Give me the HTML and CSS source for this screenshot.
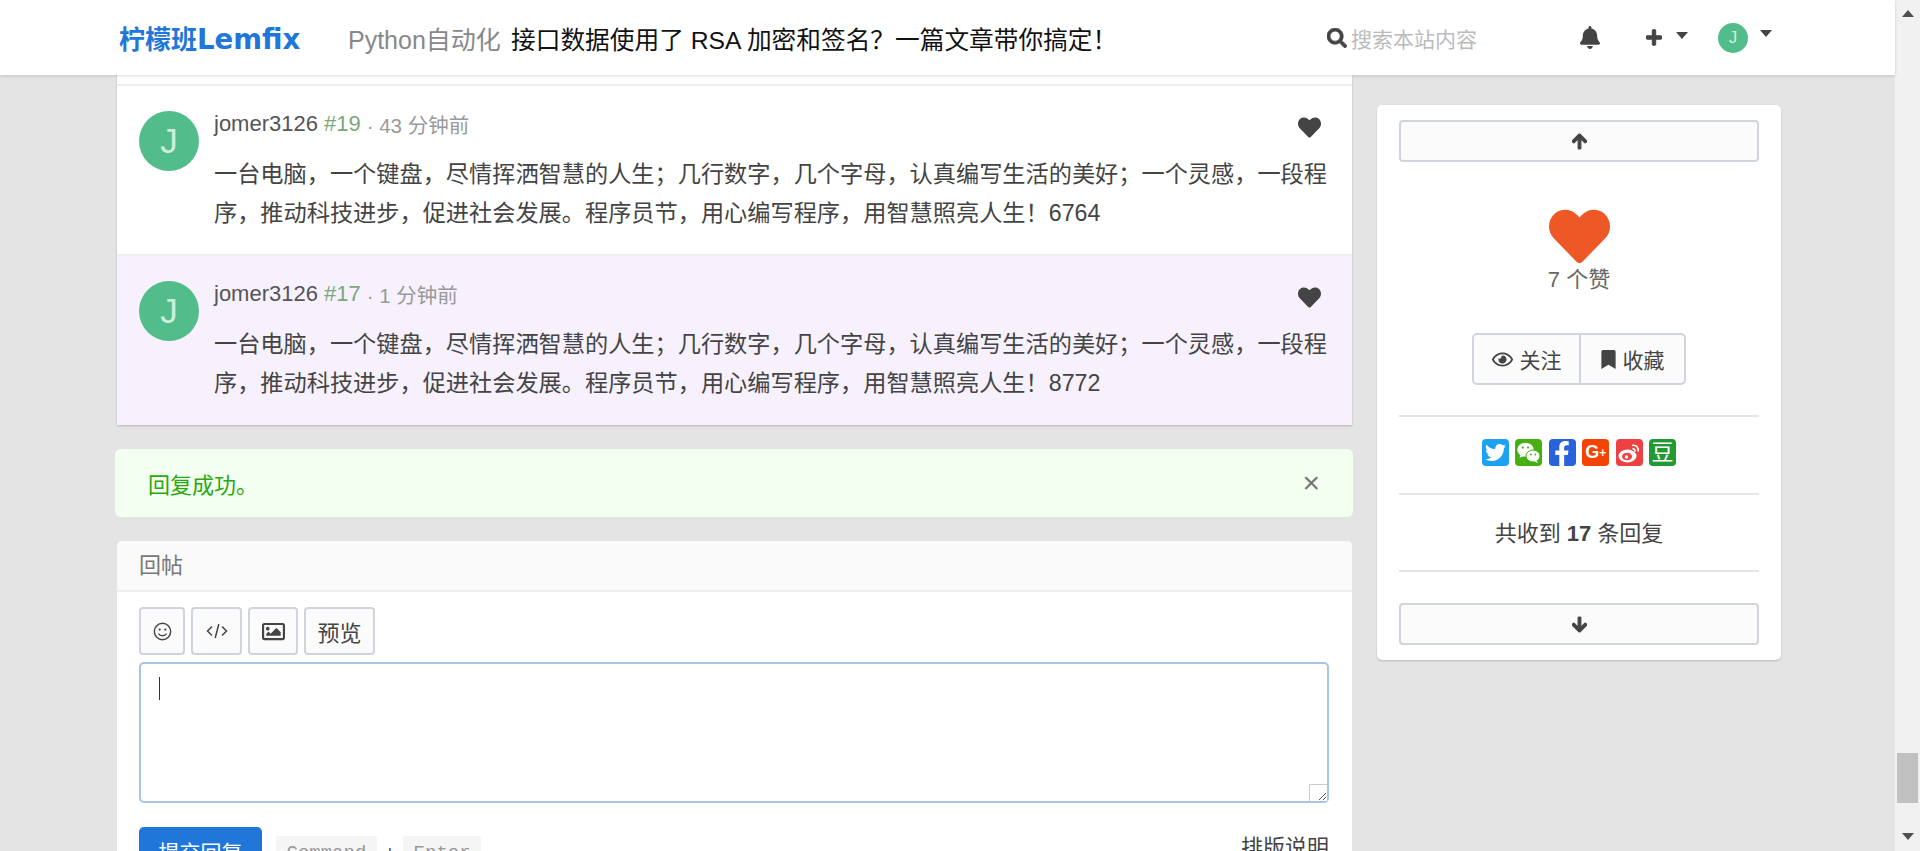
FILE: index.html
```html
<!DOCTYPE html>
<html lang="en">
<head>
    <meta charset="UTF-8">
    <title>接口数据使用了 RSA 加密和签名？一篇文章带你搞定！</title>
    <link rel="stylesheet" href="styles.css">
</head>
<body>
<div class="viewport">
    <div class="page">
        <div class="navbar">
            <a class="brand">柠檬班<span class="brand-latin">Lemfix</span></a>
            <a class="nav-node">Python自动化</a>
            <a class="nav-title">接口数据使用了 RSA 加密和签名？一篇文章带你搞定！</a>
            <div class="nav-search">
                <svg class="icon-search" viewBox="0 0 512 512"><path d="M505 442.7L405.3 343c-4.5-4.5-10.6-7-17-7H372c27.6-35.3 44-79.7 44-128C416 93.1 322.9 0 208 0S0 93.1 0 208s93.1 208 208 208c48.3 0 92.7-16.4 128-44v16.3c0 6.4 2.5 12.5 7 17l99.7 99.7c9.4 9.4 24.6 9.4 33.9 0l28.3-28.3c9.4-9.4 9.4-24.6.1-34zM208 336c-70.7 0-128-57.2-128-128 0-70.7 57.2-128 128-128 70.7 0 128 57.2 128 128 0 70.7-57.2 128-128 128z"/></svg>
                <span>搜索本站内容</span>
            </div>
            <svg class="icon-bell" viewBox="0 0 448 512"><path d="M224 512c35.32 0 63.97-28.65 63.97-64H160.03c0 35.35 28.65 64 63.97 64zm215.39-149.71c-19.32-20.76-55.47-51.99-55.47-154.29 0-77.7-54.48-139.9-127.94-155.16V32c0-17.67-14.32-32-31.98-32s-31.98 14.33-31.98 32v20.84C118.56 68.1 64.08 130.3 64.08 208c0 102.3-36.15 133.53-55.47 154.29-6 6.45-8.66 14.16-8.61 21.71.11 16.4 12.98 32 32.1 32h383.8c19.12 0 32-15.6 32.1-32 .05-7.55-2.61-15.27-8.61-21.71z"/></svg>
            <svg class="icon-plus" viewBox="0 0 448 512"><path d="M416 208H272V64c0-17.67-14.33-32-32-32h-32c-17.67 0-32 14.33-32 32v144H32c-17.67 0-32 14.33-32 32v32c0 17.67 14.33 32 32 32h144v144c0 17.67 14.33 32 32 32h32c17.67 0 32-14.33 32-32V304h144c17.67 0 32-14.33 32-32v-32c0-17.67-14.33-32-32-32z"/></svg>
            <span class="caret caret-plus"></span>
            <span class="avatar avatar-small">J</span>
            <span class="caret caret-user"></span>
        </div>

        <div class="columns">
            <div class="main">
                <div class="replies">
                    <div class="reply">
                        <span class="avatar avatar-large">J</span>
                        <div class="reply-body">
                            <div class="reply-meta">
                                <span class="reply-name">jomer3126</span>
                                <span class="reply-floor">#19</span>
                                <span class="reply-time">· 43 分钟前</span>
                                <svg class="icon-like" viewBox="0 0 512 512"><path d="M462.3 62.6C407.5 15.9 326 24.3 275.7 76.2L256 96.5l-19.7-20.3C186.1 24.3 104.5 15.9 49.7 62.6c-62.8 53.6-66.1 149.8-9.9 207.9l193.5 199.8c12.5 12.9 32.8 12.9 45.3 0l193.5-199.8c56.3-58.1 53-154.3-9.8-207.9z"/></svg>
                            </div>
                            <p class="reply-text">一台电脑，一个键盘，尽情挥洒智慧的人生；几行数字，几个字母，认真编写生活的美好；一个灵感，一段程序，推动科技进步，促进社会发展。程序员节，用心编写程序，用智慧照亮人生！6764</p>
                        </div>
                    </div>
                    <div class="reply reply-new">
                        <span class="avatar avatar-large">J</span>
                        <div class="reply-body">
                            <div class="reply-meta">
                                <span class="reply-name">jomer3126</span>
                                <span class="reply-floor">#17</span>
                                <span class="reply-time">· 1 分钟前</span>
                                <svg class="icon-like" viewBox="0 0 512 512"><path d="M462.3 62.6C407.5 15.9 326 24.3 275.7 76.2L256 96.5l-19.7-20.3C186.1 24.3 104.5 15.9 49.7 62.6c-62.8 53.6-66.1 149.8-9.9 207.9l193.5 199.8c12.5 12.9 32.8 12.9 45.3 0l193.5-199.8c56.3-58.1 53-154.3-9.8-207.9z"/></svg>
                            </div>
                            <p class="reply-text">一台电脑，一个键盘，尽情挥洒智慧的人生；几行数字，几个字母，认真编写生活的美好；一个灵感，一段程序，推动科技进步，促进社会发展。程序员节，用心编写程序，用智慧照亮人生！8772</p>
                        </div>
                    </div>
                </div>

                <div class="alert">
                    <span>回复成功。</span>
                    <span class="alert-close">×</span>
                </div>

                <div class="composer">
                    <div class="composer-head">回帖</div>
                    <div class="composer-body">
                        <div class="toolbar">
                            <button class="tool tool-smile">
                                <svg viewBox="0 0 20 20"><circle cx="10" cy="10" r="8.6"/><circle class="dot" cx="7" cy="8" r="1.2"/><circle class="dot" cx="13" cy="8" r="1.2"/><path d="M5.6 12.2c2.2 3 6.6 3 8.8 0"/></svg>
                            </button>
                            <button class="tool tool-code">
                                <svg viewBox="0 0 22 20"><path d="M6 5.5L1.5 10 6 14.5M16 5.5L20.5 10 16 14.5M12.8 3L9.2 17"/></svg>
                            </button>
                            <button class="tool tool-image">
                                <svg viewBox="0 0 512 512"><path d="M464 64H48C21.49 64 0 85.49 0 112v288c0 26.51 21.49 48 48 48h416c26.51 0 48-21.49 48-48V112c0-26.51-21.49-48-48-48zm-6 336H54a6 6 0 0 1-6-6V118a6 6 0 0 1 6-6h404a6 6 0 0 1 6 6v276a6 6 0 0 1-6 6zM128 152c-22.091 0-40 17.909-40 40s17.909 40 40 40 40-17.909 40-40-17.909-40-40-40zM96 352h320v-80l-87.515-87.515c-4.686-4.686-12.284-4.686-16.971 0L192 304l-39.515-39.515c-4.686-4.686-12.284-4.686-16.971 0L96 304v48z"/></svg>
                            </button>
                            <button class="tool tool-preview">预览</button>
                        </div>
                        <div class="editor">
                            <span class="editor-caret"></span>
                            <span class="editor-resize">
                                <svg viewBox="0 0 17 16"><path d="M9 15L16 8M13 15L16 12"/></svg>
                            </span>
                        </div>
                        <div class="composer-foot">
                            <button class="submit">提交回复</button>
                            <kbd>Command</kbd>
                            <span class="kbd-plus">+</span>
                            <kbd>Enter</kbd>
                            <a class="format-help">排版说明</a>
                        </div>
                    </div>
                </div>
            </div>

            <div class="sidebar">
                <button class="jump jump-up">
                    <svg viewBox="0 0 448 512"><path d="M34.9 289.5l-22.2-22.2c-9.4-9.4-9.4-24.6 0-33.9L207 39c9.4-9.4 24.6-9.4 33.9 0l194.3 194.3c9.4 9.4 9.4 24.6 0 33.9L413 289.4c-9.5 9.5-25 9.3-34.3-.4L264 168.6V456c0 13.3-10.7 24-24 24h-32c-13.3 0-24-10.7-24-24V168.6L69.2 289.1c-9.3 9.8-24.8 10-34.3.4z"/></svg>
                </button>
                <div class="likes">
                    <svg class="icon-big-heart" viewBox="0 0 512 512"><path d="M462.3 62.6C407.5 15.9 326 24.3 275.7 76.2L256 96.5l-19.7-20.3C186.1 24.3 104.5 15.9 49.7 62.6c-62.8 53.6-66.1 149.8-9.9 207.9l193.5 199.8c12.5 12.9 32.8 12.9 45.3 0l193.5-199.8c56.3-58.1 53-154.3-9.8-207.9z"/></svg>
                    <span>7 个赞</span>
                </div>
                <div class="btn-group">
                    <button class="group-btn">
                        <svg class="icon-eye" viewBox="0 0 576 512"><path d="M288 144a110.94 110.94 0 0 0-31.24 5 55.4 55.4 0 0 1 7.24 27 56 56 0 0 1-56 56 55.4 55.4 0 0 1-27-7.24A111.71 111.71 0 1 0 288 144zm284.52 97.4C518.29 135.59 410.93 64 288 64S57.68 135.64 3.48 241.41a32.35 32.35 0 0 0 0 29.19C57.71 376.41 165.07 448 288 448s230.32-71.64 284.52-177.41a32.35 32.35 0 0 0 0-29.19zM288 400c-98.65 0-189.09-55-237.93-144C98.91 167 189.34 112 288 112s189.09 55 237.93 144C477.1 345 386.66 400 288 400z"/></svg>
                        关注
                    </button>
                    <button class="group-btn">
                        <svg class="icon-bookmark" viewBox="0 0 384 512"><path d="M0 512V48C0 21.49 21.49 0 48 0h288c26.51 0 48 21.49 48 48v464L192 400 0 512z"/></svg>
                        收藏
                    </button>
                </div>
                <div class="shares">
                    <span class="share share-twitter">
                        <svg viewBox="0 0 512 512"><path d="M459.37 151.716c.325 4.548.325 9.097.325 13.645 0 138.72-105.583 298.558-298.558 298.558-59.452 0-114.68-17.219-161.137-47.106 8.447.974 16.568 1.299 25.34 1.299 49.055 0 94.213-16.568 130.274-44.832-46.132-.975-84.792-31.188-98.112-72.772 6.498.974 12.995 1.624 19.818 1.624 9.421 0 18.843-1.3 27.614-3.573-48.081-9.747-84.143-51.98-84.143-102.985v-1.299c13.969 7.797 30.214 12.67 47.431 13.319-28.264-18.843-46.781-51.005-46.781-87.391 0-19.492 5.197-37.36 14.294-52.954 51.655 63.675 129.3 105.258 216.365 109.807-1.624-7.797-2.599-15.918-2.599-24.04 0-57.828 46.782-104.934 104.934-104.934 30.213 0 57.502 12.67 76.67 33.137 23.715-4.548 46.456-13.32 66.599-25.34-7.798 24.366-24.366 44.833-46.132 58.9 21.117-2.274 41.584-8.122 60.426-16.243-14.292 20.791-32.161 39.308-52.628 54.253z"/></svg>
                    </span>
                    <span class="share share-wechat">
                        <svg viewBox="0 0 27 27"><ellipse cx="10.5" cy="10.8" rx="8.2" ry="7"/><path d="M5.5 15.5l-1 3.5 4-2z"/><ellipse class="wechat-front" cx="18" cy="17" rx="7" ry="6"/><path d="M21.5 21.5l1.5 2.5-3.5-1.5z"/><circle class="eye" cx="7.8" cy="8.6" r="1.1"/><circle class="eye" cx="13" cy="8.6" r="1.1"/><circle class="eye" cx="15.8" cy="15.5" r=".9"/><circle class="eye" cx="20.3" cy="15.5" r=".9"/></svg>
                    </span>
                    <span class="share share-facebook">
                        <svg viewBox="0 0 320 512"><path d="M279.14 288l14.22-92.66h-88.91v-60.13c0-25.35 12.42-50.06 52.24-50.06h40.42V6.26S260.43 0 225.36 0c-73.22 0-121.08 44.38-121.08 124.72v70.62H22.89V288h81.39v224h100.17V288z"/></svg>
                    </span>
                    <span class="share share-google">G<small>+</small></span>
                    <span class="share share-weibo">
                        <svg viewBox="0 0 27 27"><ellipse class="weibo-body" cx="11.5" cy="17" rx="9" ry="6.5"/><ellipse class="weibo-eye" cx="11" cy="17.5" rx="5" ry="3.8"/><circle class="weibo-pupil" cx="10.5" cy="18" r="1.7"/><path class="weibo-wave" d="M16 6.5c4-1 7 2 6 6M16.5 10c2-.4 2.8 1 2.3 2.7"/></svg>
                    </span>
                    <span class="share share-douban">豆</span>
                </div>
                <div class="total">共收到 <b>17</b> 条回复</div>
                <button class="jump jump-down">
                    <svg viewBox="0 0 448 512"><path d="M413.1 222.5l22.2 22.2c9.4 9.4 9.4 24.6 0 33.9L241 473c-9.4 9.4-24.6 9.4-33.9 0L12.7 278.6c-9.4-9.4-9.4-24.6 0-33.9l22.2-22.2c9.5-9.5 25-9.3 34.3.4L184 343.4V56c0-13.3 10.7-24 24-24h32c13.3 0 24 10.7 24 24v287.4l114.8-120.5c9.3-9.8 24.8-10 34.3-.4z"/></svg>
                </button>
            </div>
        </div>
    </div>

    <div class="scrollbar">
        <span class="scroll-arrow scroll-arrow-up"></span>
        <span class="scroll-thumb"></span>
        <span class="scroll-arrow scroll-arrow-down"></span>
    </div>
</div>
</body>
</html>
```

FILE: styles.css
```css
html, body {
    margin: 0;
    height: 851px;
    overflow: hidden;
}
body {
    background-color: #e4e4e4;
    font-family: "Liberation Sans", "Noto Sans CJK SC", sans-serif;
    font-size: 22px;
    color: #444;
}
button {
    font-family: inherit;
    color: inherit;
    cursor: pointer;
}
svg {
    display: block;
    fill: currentColor;
}
.viewport {
    display: flex;
    height: 851px;
}
.page {
    flex: 1;
    min-width: 0;
}

/* navbar */
.navbar {
    position: relative;
    z-index: 2;
    display: flex;
    align-items: center;
    height: 75px;
    padding-left: 119px;
    background: #fff;
    box-shadow: 0 1px 3px rgba(0, 0, 0, 0.15);
}
.brand {
    width: 229px;
    font-size: 26px;
    font-weight: bold;
    color: #2176d9;
}
.brand-latin {
    font-family: "DejaVu Sans", sans-serif;
    font-size: 27.6px;
}
.nav-node {
    width: 163px;
    font-size: 25px;
    color: #888;
}
.nav-title {
    width: 815px;
    font-size: 24.7px;
    color: #111;
}
.nav-search {
    display: flex;
    align-items: center;
    gap: 4px;
    width: 254px;
    font-size: 21px;
    color: #bbb;
}
.icon-search {
    width: 20px;
    height: 20px;
    margin-left: 1px;
    color: #444;
    stroke: currentColor;
    stroke-width: 16;
}
.icon-bell {
    width: 20px;
    height: 23px;
    margin-right: 46px;
}
.icon-plus {
    width: 16px;
    height: 19px;
    margin-right: 14px;
    stroke: currentColor;
    stroke-width: 28;
}
.caret {
    width: 0;
    height: 0;
    border-left: 6px solid transparent;
    border-right: 6px solid transparent;
    border-top: 7px solid #444;
}
.caret-plus {
    margin-right: 30px;
    margin-bottom: 4px;
}
.caret-user {
    margin-left: 12px;
    margin-bottom: 8px;
}
.avatar {
    display: flex;
    align-items: center;
    justify-content: center;
    flex-shrink: 0;
    border-radius: 50%;
    background: #52bd8b;
    color: #cdeedd;
}
.avatar-small {
    width: 30px;
    height: 30px;
    font-size: 17px;
}
.avatar-large {
    width: 60px;
    height: 60px;
    font-size: 35px;
}

/* layout */
.columns {
    display: flex;
    gap: 25px;
    padding-left: 117px;
}
.main {
    width: 1235px;
}

/* replies */
.replies {
    padding-top: 9px;
    background: #fff;
    box-shadow: 0 1px 2px rgba(0, 0, 0, 0.2);
}
.reply {
    display: flex;
    gap: 15px;
    height: 143px;
    padding: 25px 22px 0;
    border-top: 2px solid #eee;
}
.reply-new {
    height: 144px;
    background: #f6f1fc;
}
.reply-body {
    flex: 1;
    min-width: 0;
}
.reply-meta {
    display: flex;
    align-items: center;
    gap: 6px;
    height: 25px;
    font-size: 22px;
    color: #999;
}
.reply-name {
    color: #555;
}
.reply-floor {
    color: #7aa87a;
}
.reply-time {
    font-size: 20.5px;
}
.icon-like {
    width: 23px;
    height: 23px;
    margin-left: auto;
    margin-top: 8px;
    margin-right: 9px;
    color: #444;
}
.reply-text {
    margin: 19px 0 0;
    font-size: 23.2px;
    line-height: 38.5px;
    color: #444;
}

/* alert */
.alert {
    display: flex;
    align-items: center;
    justify-content: space-between;
    height: 68px;
    margin: 24px -1px 24px -2px;
    padding: 0 33px;
    border-radius: 6px;
    background: #f3fff0;
    color: #2ba80f;
}
.alert-close {
    font-size: 30px;
    color: #777;
}

/* composer */
.composer {
    border-radius: 5px 5px 0 0;
    background: #fff;
}
.composer-head {
    height: 49px;
    padding-left: 22px;
    line-height: 49px;
    background: #fafafa;
    border-bottom: 2px solid #eee;
    border-radius: 5px 5px 0 0;
    color: #777;
}
.composer-body {
    padding: 15px 23px 0 22px;
}
.toolbar {
    display: flex;
    gap: 6px;
}
.tool {
    display: flex;
    align-items: center;
    justify-content: center;
    height: 48px;
    padding: 0;
    border: 2px solid #d0d5dd;
    border-radius: 4px;
    background: #fbfbfb;
}
.tool-smile {
    width: 46px;
}
.tool-smile svg {
    width: 19px;
    height: 19px;
    fill: none;
    stroke: #444;
    stroke-width: 1.5;
}
.tool-smile .dot {
    fill: #444;
    stroke: none;
}
.tool-code {
    width: 51px;
}
.tool-code svg {
    width: 22px;
    height: 20px;
    fill: none;
    stroke: #444;
    stroke-width: 1.5;
}
.tool-image {
    width: 50px;
}
.tool-image svg {
    width: 23px;
    height: 23px;
}
.tool-preview {
    width: 71px;
    font-size: 22px;
}
.editor {
    position: relative;
    height: 137px;
    margin-top: 7px;
    border: 2px solid #a9c3e2;
    border-radius: 5px;
    background: #fff;
}
.editor-caret {
    position: absolute;
    top: 13px;
    left: 18px;
    width: 1px;
    height: 23px;
    background: #333;
}
.editor-resize {
    position: absolute;
    right: 0;
    bottom: 0;
    width: 17px;
    height: 16px;
    border-top: 1px solid #ccc;
    border-left: 1px solid #ccc;
    background: #fff;
}
.editor-resize svg {
    fill: none;
    stroke: #555;
    stroke-width: 1;
}
.composer-foot {
    display: flex;
    align-items: flex-start;
    margin-top: 24px;
}
.submit {
    width: 123px;
    height: 48px;
    padding: 0;
    border: 0;
    border-radius: 5px;
    background: #2176d9;
    color: #fff;
    font-size: 21px;
}
kbd {
    margin-top: 9px;
    margin-left: 14px;
    padding: 0 10.5px;
    border-radius: 3px;
    background: #f5f5f5;
    color: #999;
    font-family: "Liberation Mono", monospace;
    font-size: 19px;
    line-height: 34px;
}
.kbd-plus {
    margin: 9px 0 0 7px;
    line-height: 34px;
    font-size: 21px;
    color: #555;
}
.kbd-plus + kbd {
    margin-left: 7px;
}
.format-help {
    margin-left: auto;
    margin-top: 2px;
}

/* sidebar */
.sidebar {
    box-sizing: border-box;
    display: flex;
    flex-direction: column;
    width: 404px;
    height: 555px;
    margin-top: 30px;
    padding: 15px 22px 0;
    border-radius: 5px;
    background: #fff;
    box-shadow: 0 1px 2px rgba(0, 0, 0, 0.2);
}
.jump {
    display: flex;
    align-items: center;
    justify-content: center;
    flex-shrink: 0;
    height: 42px;
    padding: 0;
    border: 2px solid #d0d5dd;
    border-radius: 4px;
    background: #fbfbfb;
}
.jump svg {
    width: 15px;
    height: 17px;
    stroke: currentColor;
    stroke-width: 36;
}
.likes {
    display: flex;
    flex-direction: column;
    align-items: center;
    margin-top: 44px;
    color: #666;
}
.icon-big-heart {
    width: 61px;
    height: 61px;
    margin-bottom: -6px;
    color: #ee5726;
}
.btn-group {
    display: flex;
    align-self: center;
    margin-top: 40px;
    border: 2px solid #d0d5dd;
    border-radius: 5px;
    background: #fbfbfb;
}
.group-btn {
    display: flex;
    align-items: center;
    justify-content: center;
    gap: 7px;
    height: 48px;
    padding: 0;
    border: 0;
    background: none;
    font-size: 21px;
}
.group-btn:first-child {
    width: 107px;
    border-right: 2px solid #d0d5dd;
}
.group-btn:last-child {
    width: 103px;
}
.icon-eye {
    width: 21px;
    height: 19px;
}
.icon-bookmark {
    width: 15px;
    height: 19px;
}
.shares {
    display: flex;
    justify-content: center;
    gap: 6.4px;
    margin-top: 30px;
    padding: 22px 0 27px;
    border-top: 2px solid #e6e6e9;
    border-bottom: 2px solid #e6e6e9;
}
.share {
    display: flex;
    align-items: center;
    justify-content: center;
    width: 27px;
    height: 27px;
    border-radius: 4px;
    color: #fff;
    overflow: hidden;
}
.share-twitter {
    background: #1da1f2;
}
.share-twitter svg {
    width: 21px;
    height: 21px;
}
.share-wechat {
    background: #44b011;
}
.share-wechat svg {
    width: 27px;
    height: 27px;
}
.share-wechat .wechat-front {
    stroke: #44b011;
    stroke-width: 1;
}
.share-wechat .eye {
    fill: #44b011;
}
.share-facebook {
    background: #2962d9;
    align-items: flex-end;
}
.share-facebook svg {
    width: 16px;
    height: 25px;
}
.share-google {
    background: #f44401;
    font-size: 18px;
    font-weight: bold;
}
.share-google small {
    font-size: 12px;
}
.share-weibo {
    background: #ee4242;
}
.share-weibo svg {
    width: 27px;
    height: 27px;
}
.weibo-eye {
    fill: #ee4242;
}
.weibo-pupil {
    fill: #fff;
}
.weibo-wave {
    fill: none;
    stroke: #fff;
    stroke-width: 1.6;
}
.share-douban {
    background: #229a32;
    font-size: 22px;
    line-height: 27px;
}
.total {
    padding: 24px 0 21px;
    border-bottom: 2px solid #e6e6e9;
    line-height: 30px;
    text-align: center;
    color: #444;
}
.jump-down {
    margin-top: 31px;
}

/* browser scrollbar */
.scrollbar {
    display: flex;
    flex-direction: column;
    align-items: center;
    flex-shrink: 0;
    width: 25px;
    padding-top: 10px;
    box-sizing: border-box;
    background: #f1f1f1;
}
.scroll-arrow {
    width: 0;
    height: 0;
    border-left: 6px solid transparent;
    border-right: 6px solid transparent;
}
.scroll-arrow-up {
    border-bottom: 7px solid #505050;
}
.scroll-arrow-down {
    margin-top: 30px;
    border-top: 7px solid #505050;
}
.scroll-thumb {
    width: 21px;
    height: 50px;
    margin-top: 736px;
    background: #c1c1c1;
}
```
